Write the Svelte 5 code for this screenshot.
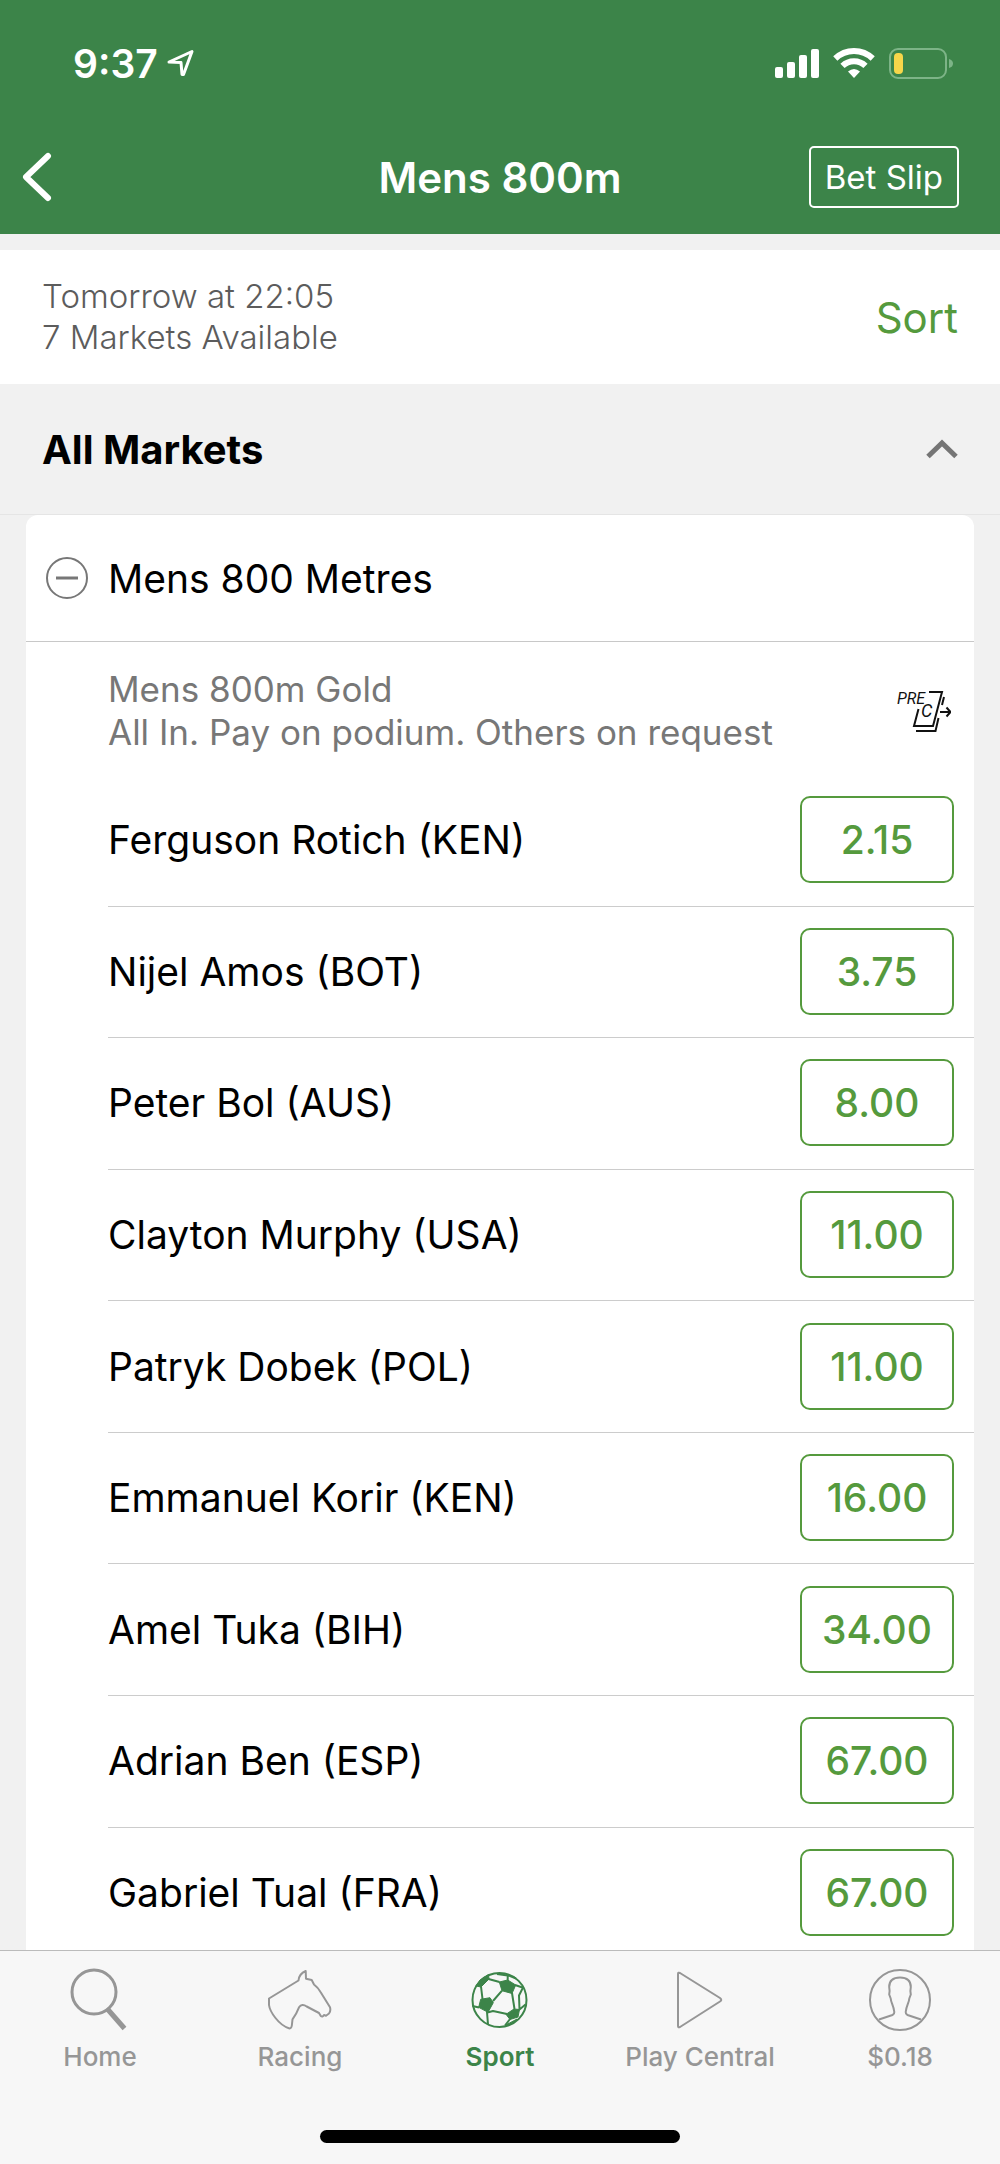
<script>
  const runners = [
    { name: 'Ferguson Rotich (KEN)', odds: '2.15' },
    { name: 'Nijel Amos (BOT)', odds: '3.75' },
    { name: 'Peter Bol (AUS)', odds: '8.00' },
    { name: 'Clayton Murphy (USA)', odds: '11.00' },
    { name: 'Patryk Dobek (POL)', odds: '11.00' },
    { name: 'Emmanuel Korir (KEN)', odds: '16.00' },
    { name: 'Amel Tuka (BIH)', odds: '34.00' },
    { name: 'Adrian Ben (ESP)', odds: '67.00' },
    { name: 'Gabriel Tual (FRA)', odds: '67.00' }
  ];
  const tabs = [
    { id: 'home', label: 'Home' },
    { id: 'racing', label: 'Racing' },
    { id: 'sport', label: 'Sport' },
    { id: 'play', label: 'Play Central' },
    { id: 'account', label: '$0.18' }
  ];
  let selected = $state([]);
  function toggle(name) {
    selected = selected.includes(name) ? selected.filter((n) => n !== name) : [...selected, name];
  }
</script>

<div class="page">
  <header>
    <div class="status">
      <div class="clock">
        <span>9:37</span>
        <svg width="28" height="28" viewBox="0 0 28 28" fill="none" stroke="#fff" stroke-width="3" stroke-linejoin="round" aria-hidden="true"><path d="M2 13 25 2.500 16.500 25.500H15L14 13.500Z" /></svg>
      </div>
      <div class="signals" aria-hidden="true">
        <svg width="44" height="32" viewBox="0 0 44 32" fill="#fff">
          <rect x="0" y="20" width="8" height="11" rx="2" /><rect x="12" y="15" width="8" height="16" rx="2" /><rect x="24" y="8" width="8" height="23" rx="2" /><rect x="36" y="2" width="8" height="29" rx="2" />
        </svg>
        <svg width="42" height="32" viewBox="0 0 42 32" fill="none" stroke="#fff" stroke-width="6">
          <path d="M2.300 11.500A27 27 0 0 1 39.700 11.500" /><path d="M9.500 18.800A16.500 16.500 0 0 1 32.500 18.800" />
          <path d="M15 24.500Q21 19.500 27 24.500L21 31Z" fill="#fff" stroke="none" />
        </svg>
        <svg width="64" height="32" viewBox="0 0 64 32">
          <rect x="1" y="2" width="56" height="29" rx="8" fill="none" stroke="#7db487" stroke-width="2" />
          <rect x="5" y="6" width="9" height="21" rx="4" fill="#f7d64a" />
          <path d="M60 12Q64 13 64 16.500T60 21Z" fill="#7db487" />
        </svg>
      </div>
    </div>
    <nav class="bar" aria-label="Page">
      <button class="back" aria-label="Back">
        <svg width="32" height="50" viewBox="0 0 32 50" fill="none" stroke="#fff" stroke-width="6" stroke-linecap="round" stroke-linejoin="round"><path d="M26 4 4 25 26 46" /></svg>
      </button>
      <h1>Mens 800m</h1>
      <button class="slip">Bet Slip</button>
    </nav>
  </header>

  <section class="info">
    <p>Tomorrow at 22:05<br />7 Markets Available</p>
    <button class="sort">Sort</button>
  </section>

  <main>
    <button class="all">
      <span>All Markets</span>
      <svg width="32" height="20" viewBox="0 0 32 20" fill="none" stroke="#757575" stroke-width="5" aria-hidden="true"><path d="M2 17.500 16 4 30 17.500" /></svg>
    </button>

    <section class="card">
      <button class="market">
        <svg width="42" height="42" viewBox="0 0 42 42" fill="none" stroke="#777" stroke-width="2" aria-hidden="true"><circle cx="21" cy="21" r="20" /><path d="M10 21H32" stroke-width="3" /></svg>
        <span>Mens 800 Metres</span>
      </button>
      <div class="terms">
        <p>Mens 800m Gold<br />All In. Pay on podium. Others on request</p>
        <svg class="pre" width="54" height="44" viewBox="0 0 54 44" fill="none" stroke="#111" stroke-width="2" role="img" aria-label="Pre cash out">
          <text x="0" y="15">PRE</text>
          <text class="c" x="24" y="28">C</text>
          <path d="M32 3H45L36 37H17L21.500 20M47 8 45 16M41.500 29 38.500 42H19M43 23H53M49.500 18.500 53.500 23 49.500 27.500" />
        </svg>
      </div>
      <ul>
        {#each runners as runner (runner.name)}
          <li>
            <span>{runner.name}</span>
            <button class="odds" class:picked={selected.includes(runner.name)} aria-label="{runner.name} at {runner.odds}" onclick={() => toggle(runner.name)}>{runner.odds}</button>
          </li>
        {/each}
      </ul>
    </section>
  </main>

  <footer>
    <nav class="tabs" aria-label="Main">
      {#each tabs as tab (tab.id)}
        <a href="#{tab.id}" class:active={tab.id === 'sport'}>
          <svg width="64" height="64" viewBox="0 0 64 64" fill="none" stroke="currentColor" stroke-width="2" stroke-linejoin="round" aria-hidden="true">
            {#if tab.id === 'home'}
              <circle cx="26" cy="25" r="22" stroke-width="3" />
              <path d="M39 41.500 56.500 61.500" stroke-width="5" />
            {:else if tab.id === 'racing'}
              <path d="M1 31.500 30.500 13.500C31 8 34 5.500 37.700 4L38 11.700 43.700 13 46 17.500Q50 20.500 52.700 25.300L62 40.300Q63 44 61 46.500L58 48.700 56 48Q54.500 50.500 52.800 49L51 46 38.700 39.500Q34 36 31 40.300C29 45.500 27 49 24.500 52.300L24 57Q23.800 61.500 21.500 61.500C15 59.500 11 55.500 7.500 51C3.500 46 1.500 42 1 38Z" />
            {:else if tab.id === 'sport'}
              <circle cx="31.500" cy="33" r="27" />
              <path d="M31.300 15 39.700 13 47.700 18 44 26.500 34 23.700ZM12.700 32.300 22 30.700 25.300 35.700 20 45.300 10.700 40.300ZM46 42 51.500 42.500 50 50 42 52.500 38 47.300ZM8 19 12 13 20.500 7.500 21 12 13 20ZM37 58.500 49 52 44 57Z" fill="currentColor" stroke-width="1" />
              <path d="M25 34 34 23.700M44 26 46.500 42M39 47 25 44 19.500 45.500M20.500 12 31.500 15M13 19.500 14.500 32M19 45 20 57.500M11 40.500 4.500 39M39.700 13.500V8L48 11.500M39.700 8.500 29 7M47 18 56 21M55 20.500 51 28.500 51.500 42.500 57.500 37.500M42 52 37 58.500" />
            {:else if tab.id === 'play'}
              <path d="M10 7Q10 5 12 6L52 31Q54.500 33 52 34.500L12 60Q10 61 10 59Z" />
            {:else}
              <circle cx="32" cy="33" r="30" />
              <path d="M11 52.500 24.500 48Q26.500 47 26.300 45C25.500 38 23 36 22.700 31.500L21.200 27.500Q22 24 21.200 20C21.200 13.500 25.500 10.500 32 10.500S42.800 13.500 42.800 20Q42 24 42.800 27.500L41.300 31.500C41 36 38.500 38 37.700 45Q37.500 47 39.500 48L53 52.500" />
            {/if}
          </svg>
          <span>{tab.label}</span>
        </a>
      {/each}
    </nav>
    <div class="home-indicator"></div>
  </footer>
</div>

<style>
  :global(body) {
    margin: 0;
    background: #f1f1f1;
  }
  .page {
    min-height: 100vh;
    display: flex;
    flex-direction: column;
    background: #f1f1f1;
    color: #000;
    font-family: Inter, 'Liberation Sans', sans-serif;
    font-size: 39px;
  }
  svg {
    display: block;
    flex: none;
  }
  button {
    margin: 0;
    padding: 0;
    border: 0;
    background: none;
    color: inherit;
    font: inherit;
    cursor: pointer;
  }
  p,
  h1,
  ul {
    margin: 0;
    padding: 0;
  }
  header {
    background: #3c8449;
    color: #fff;
  }
  .status {
    display: flex;
    align-items: center;
    justify-content: space-between;
    height: 120px;
    padding: 6px 47px 0 73px;
    box-sizing: border-box;
  }
  .clock {
    display: flex;
    align-items: center;
    gap: 9px;
    font-weight: 600;
  }
  .signals {
    display: flex;
    gap: 14px;
  }
  .bar {
    display: grid;
    grid-template-columns: 1fr auto 1fr;
    align-items: center;
    height: 114px;
    padding: 0 41px 0 22px;
  }
  .back {
    justify-self: start;
  }
  h1 {
    font-size: 42px;
    font-weight: 600;
    padding-left: 19px;
  }
  .slip {
    justify-self: end;
    height: 62px;
    padding: 0 14px;
    border: 2px solid #fff;
    border-radius: 5px;
    font-size: 33px;
  }
  .info {
    display: flex;
    align-items: center;
    justify-content: space-between;
    margin-top: 16px;
    height: 134px;
    padding: 0 42px;
    background: #fff;
  }
  .info p {
    color: #5c5c5c;
    font-size: 33px;
    font-weight: 300;
    line-height: 41px;
  }
  .sort {
    color: #559a3d;
    font-size: 42px;
  }
  main {
    flex: 1;
    display: flex;
    flex-direction: column;
  }
  .all {
    display: flex;
    align-items: center;
    justify-content: space-between;
    height: 131px;
    padding: 0 42px;
    border-bottom: 1px solid #e5e5e5;
    font-size: 40px;
    font-weight: 700;
  }
  .card {
    flex: 1;
    display: flex;
    flex-direction: column;
    margin: 0 26px;
    border-radius: 12px 12px 0 0;
    background: #fff;
  }
  .market {
    display: flex;
    align-items: center;
    gap: 20px;
    height: 127px;
    padding: 0 20px;
    border-bottom: 1px solid #c8c8c8;
  }
  .terms {
    display: flex;
    align-items: center;
    justify-content: space-between;
    padding: 26px 23px 21px 82px;
    color: #777;
    font-size: 35px;
    line-height: 43px;
  }
  .pre text {
    fill: #111;
    stroke: none;
    font: italic 400 16px 'Liberation Sans Narrow', Roboto, sans-serif;
  }
  .pre .c {
    font-size: 18px;
  }
  ul {
    flex: 1;
    display: flex;
    flex-direction: column;
    padding-left: 82px;
    list-style: none;
  }
  li {
    flex: 1 0 auto;
    display: flex;
    align-items: center;
    justify-content: space-between;
    padding: 21px 20px 22px 0;
    border-bottom: 1px solid #ccc;
  }
  li:last-child {
    padding-bottom: 14px;
    border-bottom: 0;
  }
  .odds {
    width: 154px;
    height: 87px;
    border: 2px solid #559a3d;
    border-radius: 10px;
    color: #559a3d;
    font-weight: 500;
  }
  .odds.picked {
    background: #559a3d;
    color: #fff;
  }
  footer {
    border-top: 1px solid #bbb;
    background: #f7f7f7;
  }
  .tabs {
    display: grid;
    grid-template-columns: repeat(5, 1fr);
    padding-top: 16px;
  }
  .tabs a {
    display: flex;
    flex-direction: column;
    align-items: center;
    gap: 10px;
    color: #969696;
    font-size: 26px;
    font-weight: 500;
    line-height: 32px;
    text-decoration: none;
  }
  .tabs a.active {
    color: #3c8449;
    font-weight: 600;
  }
  .home-indicator {
    width: 36%;
    height: 13px;
    margin: 57px auto 21px;
    border-radius: 7px;
    background: #000;
  }
</style>
